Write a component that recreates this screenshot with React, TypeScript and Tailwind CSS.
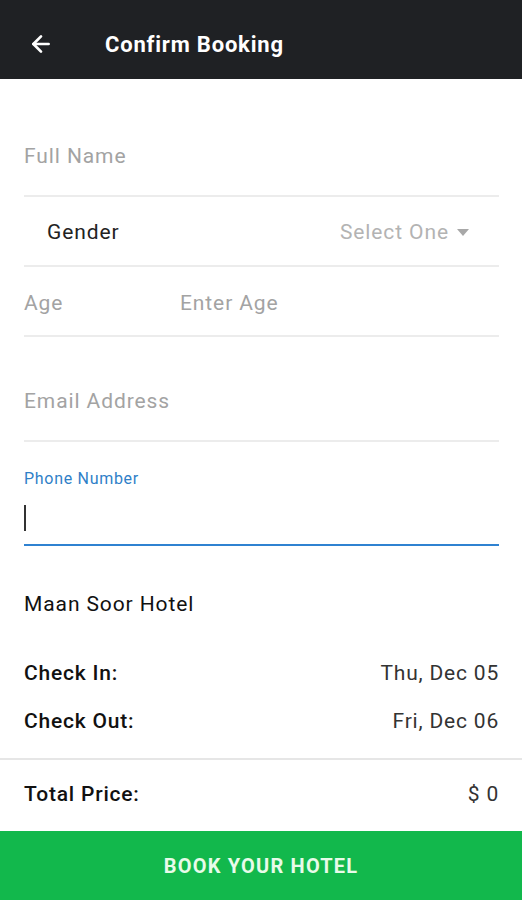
import { ArrowLeft } from "lucide-react"

const font = { fontFamily: "Roboto, 'Noto Sans', Arial, sans-serif" }

function Row({ label, value }: { label: string; value: string }) {
  return (
    <div className="flex items-center justify-between text-[21px] leading-6 tracking-[0.8px]">
      <span className="font-medium text-[#111]">{label}</span>
      <span className="text-[#333]">{value}</span>
    </div>
  )
}

export default function App() {
  return (
    <div className="flex h-[900px] w-[522px] flex-col bg-white" style={font}>
      {/* toolbar */}
      <header className="flex h-[79px] shrink-0 items-center bg-[#1f2124] pt-[9px] text-white">
        <ArrowLeft className="ml-[28px] h-[26px] w-[26px]" strokeWidth={2.5} />
        <h1 className="ml-[51px] text-[22px] font-bold tracking-[0.8px]">Confirm Booking</h1>
      </header>

      <div className="flex-1 pl-6 pr-[23px] text-[21px] leading-6 tracking-[0.9px]">
        {/* full name */}
        <div className="border-b-2 border-[#ececec] pt-[65px] pb-[27px] text-[#a3a3a3]">Full Name</div>

        {/* gender */}
        <div className="flex items-center justify-between border-b-2 border-[#ececec] pt-[23px] pb-[21px]">
          <span className="pl-[23px] text-[#222]">Gender</span>
          <span className="flex items-center gap-2 pr-[30px] text-[#b3b3b3]">
            Select One
            <svg width="12" height="7" viewBox="0 0 12 7" className="fill-[#a8a8a8]">
              <path d="M0 0h12L6 7z" />
            </svg>
          </span>
        </div>

        {/* age */}
        <div className="flex items-center border-b-2 border-[#ececec] pt-[24px] pb-[20px] text-[#a3a3a3]">
          <span className="w-[156px]">Age</span>
          <span>Enter Age</span>
        </div>

        {/* email */}
        <div className="border-b-2 border-[#ececec] pt-[52px] pb-[27px] text-[#a3a3a3]">Email Address</div>

        {/* phone (focused) */}
        <div className="border-b-2 border-[#2f82d1] pt-[27px] pb-[13px]">
          <div className="text-[16px] leading-5 tracking-[0.7px] text-[#2f7fc8]">Phone Number</div>
          <div className="mt-4 h-[26px] w-[2px] bg-[#333]" />
        </div>

        {/* hotel */}
        <div className="mt-[46px] text-[#111]">Maan Soor Hotel</div>

        <div className="mt-[45px] flex flex-col gap-6">
          <Row label="Check In:" value="Thu, Dec 05" />
          <Row label="Check Out:" value="Fri, Dec 06" />
        </div>
      </div>

      <div className="border-t-2 border-[#e6e6e6] pl-6 pr-[23px] pt-[22px] pb-[25px]">
        <Row label="Total Price:" value="$ 0" />
      </div>

      <button className="flex h-[69px] shrink-0 items-center justify-center bg-[#12b84c] text-[20px] font-bold tracking-[1.2px] text-[#e8fbe9]">
        BOOK YOUR HOTEL
      </button>
    </div>
  )
}
